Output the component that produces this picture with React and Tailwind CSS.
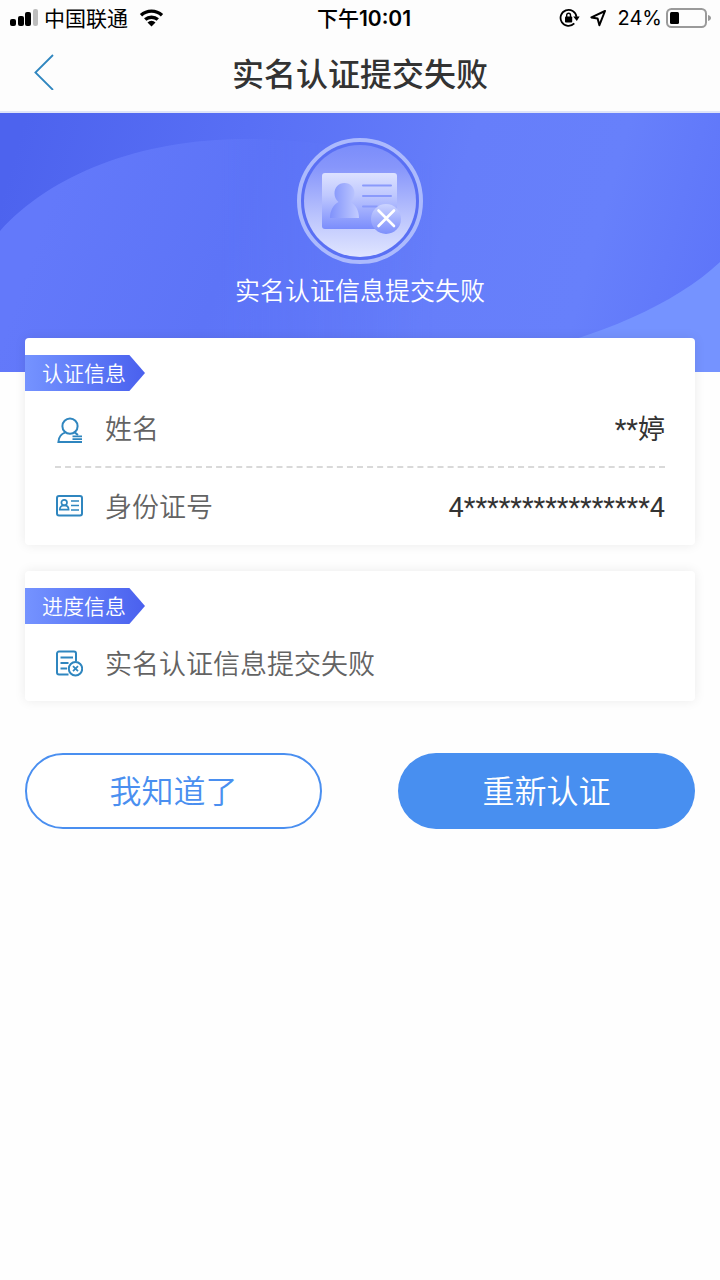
import React from 'react';

function StatusBar() {
   return (
      <div className="grid h-9 grid-cols-3 items-center px-2 text-black">
         <div className="flex items-center gap-1">
            <svg className="h-5 w-8" viewBox="0 0 32 20">
               <rect x="2" y="11" width="6" height="7" rx="2" />
               <rect x="10" y="8" width="6" height="10" rx="2" />
               <rect x="17" y="4" width="6" height="14" rx="2" />
               <rect x="25" y="1" width="5" height="17" rx="2" fill="#bdbdbd" />
            </svg>
            <span className="pb-0.5 text-[21px] leading-none">中国联通</span>
            <svg className="ml-1.5 h-5 w-7" viewBox="0 0 28 20" fill="none" stroke="#000" strokeWidth="3.4">
               <path d="M3 7.2a15.6 15.6 0 0 1 21 0" />
               <path d="M7.2 11.6a9.4 9.4 0 0 1 12.6 0" />
               <path d="M13.5 18.4l-4-4a5.8 5.8 0 0 1 8 0z" fill="#000" stroke="none" />
            </svg>
         </div>
         <div className="pl-2 text-center text-[21px] leading-none font-medium whitespace-nowrap">
            下午<span className="font-[Inter,sans-serif] font-semibold">10:01</span>
         </div>
         <div className="flex items-center justify-end">
            <svg className="mr-2 h-5 w-6" viewBox="0 0 24 20" fill="none" stroke="#000" strokeWidth="1.8">
               <path d="M16.3 15.4a8 8 0 1 1 2.2-6.6" />
               <path d="M15.2 8.6h6.4l-2.8 4.4z" fill="#000" stroke="none" />
               <rect x="7" y="8.4" width="7.2" height="6.2" rx="0.8" fill="#000" stroke="none" />
               <path d="M8.7 9V7.2a1.9 1.9 0 0 1 3.8 0V9" strokeWidth="1.4" />
            </svg>
            <svg className="mr-3 h-5 w-4" viewBox="0 0 16 20" fill="none" stroke="#000" strokeWidth="2" strokeLinejoin="round">
               <path d="M15 3L1.4 9.4l6.2 1.2 1.8 6.6z" />
            </svg>
            <span className="mr-0.5 font-[Inter,sans-serif] text-[20px] leading-none">24%</span>
            <svg className="h-5 w-12" viewBox="0 0 48 20">
               <rect x="3" y="1" width="39" height="18" rx="4.5" fill="none" stroke="#9a9a9a" strokeWidth="2" />
               <rect x="6" y="4" width="9" height="12" rx="1.5" />
               <path d="M44 7c2 .6 3 1.6 3 3s-1 2.4-3 3z" fill="#9a9a9a" />
            </svg>
         </div>
      </div>
   );
}

function Header() {
   return (
      <header className="border-b-2 border-[#dfe4f8] bg-[#fdfdfd]">
         <StatusBar />
         <div className="grid h-[75px] grid-cols-[88px_1fr_88px] items-center pb-1">
            <button type="button" aria-label="返回" className="flex h-full items-center justify-center">
               <svg className="h-9 w-5" viewBox="0 0 20 36" fill="none" stroke="#2f86bf" strokeWidth="1.8">
                  <path d="M19 1L1.4 18.5 19 36" />
               </svg>
            </button>
            <h1 className="text-center text-[32px] leading-none font-medium text-[#333]">实名认证提交失败</h1>
         </div>
      </header>
   );
}

function FailBadge() {
   return (
      <svg className="size-32" viewBox="0 0 128 128">
         <defs>
            <linearGradient id="disc" x1="0" y1="0" x2="0" y2="1">
               <stop offset="0" stopColor="#7b8dfa" />
               <stop offset="0.2" stopColor="#8796fb" />
               <stop offset="0.65" stopColor="#bcc5fd" />
               <stop offset="1" stopColor="#e0e5ff" />
            </linearGradient>
            <linearGradient id="card" x1="0" y1="0" x2="0" y2="1">
               <stop offset="0" stopColor="#dde2ff" />
               <stop offset="0.4" stopColor="#bfc8fe" />
               <stop offset="1" stopColor="#7b8dfc" />
            </linearGradient>
            <linearGradient id="person" x1="0" y1="0" x2="1" y2="0">
               <stop offset="0" stopColor="#8092fb" />
               <stop offset="1" stopColor="#c3ccff" />
            </linearGradient>
            <linearGradient id="cross" x1="0" y1="0" x2="0" y2="1">
               <stop offset="0" stopColor="#ccd4ff" />
               <stop offset="1" stopColor="#7d8ffb" />
            </linearGradient>
         </defs>
         <circle cx="64" cy="64" r="61" fill="#5a70f4" stroke="#acbafd" strokeWidth="4" />
         <circle cx="64" cy="64" r="56" fill="url(#disc)" />
         <rect x="26" y="36" width="75" height="56" rx="3" fill="url(#card)" />
         <path d="M34 81c0-7 3-13 8.500-16-2.500-2-4-5-4-8.500 0-6 4-10.500 10-10.500s10 4.500 10 10.500c0 3.500-1.500 6.500-4 8.500 5.500 3 8.500 9 8.500 16z" fill="url(#person)" />
         <path d="M67 48.500h28M67 59h28M67 69.500h14" stroke="#8a9afb" strokeWidth="2" strokeLinecap="round" />
         <circle cx="90" cy="82" r="15" fill="url(#cross)" />
         <path d="M82.500 73.500l15.500 15.500M98 73.500l-15.500 15.500" stroke="#fff" strokeWidth="2.600" strokeLinecap="round" />
      </svg>
   );
}

function Banner() {
   return (
      <section className="relative h-[259px] text-white">
         <svg className="absolute inset-0 h-full w-full" viewBox="0 0 720 259" preserveAspectRatio="none">
            <defs>
               <linearGradient id="base" gradientUnits="userSpaceOnUse" x1="20" y1="20" x2="720" y2="220">
                  <stop offset="0" stopColor="#4d63ee" />
                  <stop offset="0.3" stopColor="#586ff5" />
                  <stop offset="0.6" stopColor="#667efa" />
                  <stop offset="0.8" stopColor="#6780fb" />
                  <stop offset="1" stopColor="#5d74f9" />
               </linearGradient>
               <linearGradient id="wave" gradientUnits="userSpaceOnUse" x1="60" y1="60" x2="640" y2="260">
                  <stop offset="0" stopColor="#6379fa" />
                  <stop offset="0.3" stopColor="#5d74f7" />
                  <stop offset="0.65" stopColor="#647cfa" />
                  <stop offset="1" stopColor="#5f75fa" />
               </linearGradient>
               <linearGradient id="fade" x1="0" y1="0" x2="1" y2="0">
                  <stop offset="0.3" stopColor="#fff" />
                  <stop offset="0.6" stopColor="#fff" stopOpacity="0" />
               </linearGradient>
               <mask id="left">
                  <rect width="720" height="259" fill="url(#fade)" />
               </mask>
            </defs>
            <rect width="720" height="259" fill="url(#base)" />
            <path d="M0 118C50 62 140 26 245 26c160 0 300 60 475 124v109H0z" fill="url(#wave)" mask="url(#left)" />
            <path d="M490 248C590 228 672 194 720 149v110H490z" fill="#7593ff" />
         </svg>
         <div className="relative flex flex-col items-center pt-6">
            <FailBadge />
            <p className="mt-2.5 text-[25px] leading-7 font-[350]">实名认证信息提交失败</p>
         </div>
      </section>
   );
}

function Card({ title, children }) {
   return (
      <section className="rounded bg-white pt-[17px] shadow-[0_0_12px_rgba(0,0,0,0.08)]">
         <h2 className="flex h-9 w-[120px] items-center bg-linear-to-r from-[#7593ff] to-[#4a60ee] pb-0.5 pl-[17px] text-[21px] leading-none font-[350] text-white [clip-path:polygon(0_0,87%_0,100%_50%,87%_100%,0_100%)]">
            {title}
         </h2>
         <div className="px-[30px]">{children}</div>
      </section>
   );
}

function Row({ icon, label, value }) {
   return (
      <div className="flex h-[77px] items-center border-[#d9d9d9] not-last:border-b-2 not-last:border-dashed">
         <span className="w-[50px]">{icon}</span>
         <div className="flex flex-1 items-baseline justify-between text-[27px] leading-none">
            <span className="font-[350] text-[#636363]">{label}</span>
            {value && <span className="font-[Roboto,'Noto_Sans_CJK_SC',sans-serif] text-[#333]">{value}</span>}
         </div>
      </div>
   );
}

const iconProps = {
   className: 'size-7',
   viewBox: '0 0 28 28',
   fill: 'none',
   stroke: '#2f86bf',
   strokeWidth: 2,
};

const userIcon = (
   <svg {...iconProps}>
      <circle cx="15" cy="11.2" r="7.6" />
      <path d="M10.4 17.4C6 19 3.600 22 3.400 27H27M19.600 17.400l3.400 2.600" />
      <path d="M17.500 21.400H27M17.500 24.200H27" strokeWidth="1.800" />
   </svg>
);

const idIcon = (
   <svg {...iconProps}>
      <rect x="2" y="3" width="25" height="19.500" rx="2" />
      <circle cx="9.200" cy="9.600" r="2.800" strokeWidth="1.700" />
      <path d="M4.800 16.600c0-2.600 1.500-4.200 4.400-4.200s4.400 1.600 4.400 4.200z" strokeWidth="1.700" />
      <path d="M16 8h8M16 12.500h8M16 17h8" strokeWidth="1.700" />
   </svg>
);

const failIcon = (
   <svg {...iconProps}>
      <path d="M13.500 25.500H4a2 2 0 0 1-2-2v-19a2 2 0 0 1 2-2h15a2 2 0 0 1 2 2v8" />
      <path d="M5.500 8.500H18M5.500 14h8M5.500 19.500h6.500" />
      <circle cx="20.500" cy="19.700" r="6.700" />
      <path d="M18 17.200l5 5M23 17.200l-5 5" strokeWidth="1.800" />
   </svg>
);

export default function App() {
   return (
      <div className="min-h-screen bg-[#fefefe] font-['Noto_Sans_CJK_SC',sans-serif]">
         <Header />
         <Banner />
         <main className="relative -mt-[34px] flex flex-col gap-[26px] px-[25px]">
            <Card title="认证信息">
               <Row icon={userIcon} label="姓名" value="**婷" />
               <Row icon={idIcon} label="身份证号" value="4****************4" />
            </Card>
            <Card title="进度信息">
               <Row icon={failIcon} label="实名认证信息提交失败" />
            </Card>
            <div className="mt-[26px] grid grid-cols-2 gap-[76px] text-[32px] leading-none font-[350]">
               <button type="button" className="h-[76px] rounded-full border-2 border-[#4a8ff0] bg-white pb-1 text-[#4a8ff0]">
                  我知道了
               </button>
               <button type="button" className="h-[76px] rounded-full bg-[#488ff0] pb-1 text-white">
                  重新认证
               </button>
            </div>
         </main>
      </div>
   );
}
